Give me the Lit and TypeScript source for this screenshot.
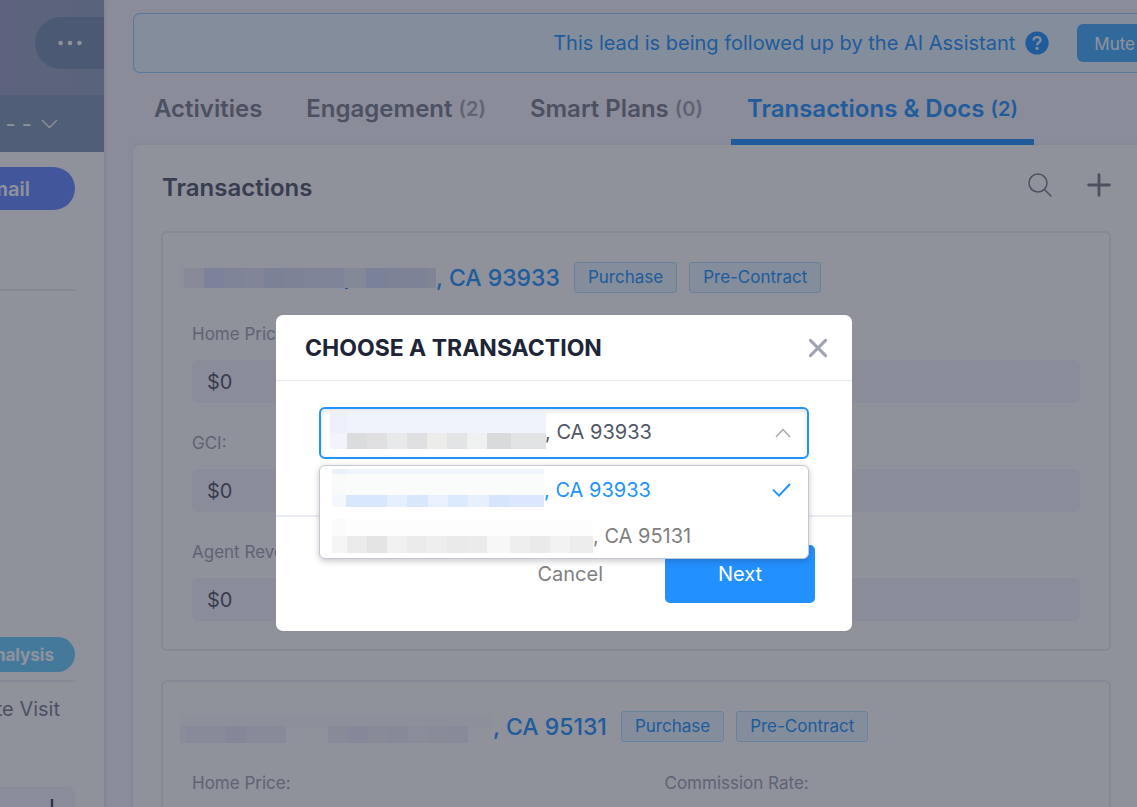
import { LitElement, html, svg, css } from "lit";
import { customElement, property, state } from "lit/decorators.js";

type Cell = [x: number, y: number, w: number, h: number, fill: string];

const mosaic = (width: number, height: number, cells: Cell[]) => html`
  <svg width=${width} height=${height} viewBox="0 0 ${width} ${height}" shape-rendering="crispEdges" aria-hidden="true">
    ${cells.map(([x, y, w, h, fill]) => svg`<rect x=${x} y=${y} width=${w} height=${h} fill=${fill}></rect>`)}
  </svg>
`;

const strip = (x: number, y: number, w: number, h: number, fills: string[]): Cell[] =>
  fills.map((fill, i) => [x + i * w, y, w, h, fill]);

interface Transaction {
  id: string;
  zip: string;
  width: number;
  cells: Cell[];
  tags: string[];
  rows: { label: string; value: string; side: string }[];
}

const ROWS = [
  { label: "Home Price:", value: "$0", side: "Commission Rate:" },
  { label: "GCI:", value: "$0", side: "" },
  { label: "Agent Revenue:", value: "$0", side: "" },
];

const TRANSACTIONS: Transaction[] = [
  {
    id: "a",
    zip: "CA 93933",
    width: 256,
    cells: [
      [0, 0, 4, 23, "#fafafd"],
      [4, 3, 20, 20, "#f0f0f7"],
      ...strip(24, 3, 20, 20, ["#d8e2fb", "#dfe4f8", "#e5e6f8", "#d7e0f8", "#dde1f5", "#dfe3f6", "#dfe3f6"]),
      [164, 3, 22, 20, "#ebecf4"],
      [186, 3, 21, 20, "#d2e1f8"],
      [207, 3, 40, 20, "#dbe1f5"],
      [247, 3, 9, 20, "#e2e4f3"],
      [165, 23, 3, 1, "#2093ff"],
    ],
    tags: ["Purchase", "Pre-Contract"],
    rows: ROWS,
  },
  {
    id: "b",
    zip: "CA 95131",
    width: 313,
    cells: [
      [0, 0, 313, 14, "#fafbfc"],
      [0, 12, 6, 20, "#f4f5fb"],
      ...strip(6, 12, 20, 20, ["#eef0f9", "#eef0f9", "#e8ebf8", "#eff0fa", "#eff0fa"]),
      ...strip(148, 12, 20, 20, ["#f0f1f8", "#ebedf8", "#f0f1f9", "#eeeff8", "#f5f5fb", "#f2f3fa", "#eef0f8"]),
    ],
    tags: ["Purchase", "Pre-Contract"],
    rows: ROWS,
  },
];

@customElement("transaction-card")
export class TransactionCard extends LitElement {
  @property({ attribute: false }) item!: Transaction;

  static styles = css`
    * { box-sizing: border-box; }
    :host {
      display: block;
      border: 2px solid #ebecf3;
      border-radius: 6px;
      padding: 29px 29px 28px;
    }
    .head { display: flex; align-items: center; gap: 12px; height: 31px; margin-bottom: 31px; }
    .address {
      display: flex; align-items: center;
      margin: 0 2px 0 -12px;
      color: #2093ff; font-size: 23px; font-weight: 500; line-height: 30px;
      text-decoration: none; white-space: pre;
    }
    .tag {
      height: 31px; padding: 0 13px;
      border: 1px solid #b4e0fb; border-radius: 3px;
      background: #e6f7ff; color: #2093ff;
      font-size: 17px; line-height: 29px; white-space: nowrap;
    }
    .fields { display: grid; grid-template-columns: 1fr 1fr; gap: 30px 57px; }
    .field { display: flex; flex-direction: column; gap: 16px; min-width: 0; }
    label { color: #a0a3af; font-size: 17px; line-height: 20px; height: 20px; }
    input {
      width: 100%; height: 43px; padding: 0 15px;
      border: 0; border-radius: 6px; background: #f5f5fa;
      color: #515666; font: inherit; font-size: 20px;
    }
  `;

  render() {
    const { id, zip, width, cells, tags, rows } = this.item;
    return html`
      <div class="head">
        <a class="address" href="#${id}">${mosaic(width, 32, cells.map(([x, y, w, h, f]) => [x, y + 3, w, Math.min(h, 29 - y), f] as Cell))}<span>, ${zip}</span></a>
        ${tags.map((t) => html`<span class="tag">${t}</span>`)}
      </div>
      <div class="fields">
        ${rows.map(
          (r, i) => html`
            <div class="field">
              <label for="l${i}">${r.label}</label>
              <input id="l${i}" .value=${r.value} />
            </div>
            <div class="field">
              <label for="r${i}">${r.side}</label>
              <input id="r${i}" aria-label=${r.side || "Amount"} />
            </div>
          `
        )}
      </div>
    `;
  }
}

@customElement("lead-sidebar")
export class LeadSidebar extends LitElement {
  static styles = css`
    * { box-sizing: border-box; }
    :host { display: block; overflow: hidden; background: #fff; box-shadow: 0 0 6px rgba(32, 36, 55, 0.12); }
    button { border: 0; font: inherit; }
    .cover { height: 95px; padding-top: 17px; display: flex; justify-content: flex-end; align-items: flex-start;
      background: linear-gradient(90deg, #9aa2c4, #94a2c0); }
    .more { width: 69px; height: 52px; padding: 0; border-radius: 26px 0 0 26px; background: #788fb0; color: #fff;
      display: grid; place-items: center; }
    .stage { height: 57px; padding: 0 46px 0 0; width: 100%; display: flex; justify-content: flex-end; align-items: center;
      gap: 9px; background: #8399b8; color: #fff; font-size: 22px; }
    .body { display: flex; flex-direction: column; padding: 15px 29px 0 0; }
    .email, .analysis { margin-left: -120px; color: #fff; text-align: right; }
    .email { height: 43px; padding: 0 45px 0 0; border-radius: 22px; background: #6488ff; font-size: 20px; font-weight: 600; }
    .rule { height: 2px; margin: 0; border: 0; background: #ebecf3; }
    .rule.first { margin: 79px 0 346px; }
    .analysis { height: 35px; padding: 0 21px 0 0; margin-bottom: 8px; border-radius: 18px; background: #68cfff;
      font-size: 17px; font-weight: 700; }
    .visit { display: flex; justify-content: flex-end; margin: 0; padding: 14px 15px 0 0; color: #797e8c;
      font-size: 20px; line-height: 26px; white-space: nowrap; height: 105px; }
    .add { height: 43px; padding: 0 12px 0 0; border-radius: 0 8px 0 0; background: #f5f5fa; color: #3c4154;
      display: flex; justify-content: flex-end; align-items: center; }
  `;

  render() {
    return html`
      <div class="cover">
        <button class="more" aria-label="More">
          <svg width="24" height="6" viewBox="0 0 24 6" fill="currentColor"><circle cx="2.6" cy="3" r="2.3" /><circle cx="12" cy="3" r="2.3" /><circle cx="21.4" cy="3" r="2.3" /></svg>
        </button>
      </div>
      <button class="stage">
        <span>- -</span>
        <svg width="17" height="10" viewBox="0 0 17 10" fill="none" stroke="currentColor" stroke-width="1.3"><path d="M1 1l7.5 7.5L16 1" /></svg>
      </button>
      <div class="body">
        <button class="email">Email</button>
        <hr class="rule first" />
        <button class="analysis">Analysis</button>
        <hr class="rule" />
        <p class="visit">Site Visit</p>
        <button class="add" aria-label="Add">
          <svg width="22" height="22" viewBox="0 0 22 22" stroke="currentColor" stroke-width="2.4"><path d="M11 1v20M1 11h20" /></svg>
        </button>
      </div>
    `;
  }
}

const OPTIONS: { zip: string; width: number; cells: Cell[] }[] = [
  {
    zip: "CA 93933",
    width: 212,
    cells: [
      [0, 2, 14, 5, "#e9f1fd"],
      [14, 2, 198, 5, "#eff4fd"],
      [0, 7, 14, 21, "#f9fafa"],
      [14, 7, 198, 21, "#fafcfb"],
      [0, 28, 14, 12, "#f4f8fd"],
      [14, 28, 41, 12, "#d9e7fc"],
      [55, 28, 20, 12, "#e6effd"],
      [75, 28, 21, 12, "#d9e7fc"],
      [96, 28, 20, 12, "#e9f1fe"],
      [116, 28, 20, 12, "#dceafd"],
      [136, 28, 21, 12, "#e8f0fd"],
      [157, 28, 20, 12, "#d6e5fc"],
      [177, 28, 35, 12, "#dbe8fc"],
    ],
  },
  {
    zip: "CA 95131",
    width: 261,
    cells: [
      [0, 6, 14, 17, "#fbfbfb"],
      [14, 6, 247, 17, "#fdfdfd"],
      [0, 23, 15, 17, "#f5f5f5"],
      ...strip(15, 23, 20, 17, ["#ebebeb", "#e4e4e4", "#f0f0f0", "#ebebeb", "#eeeeee", "#eaeaea", "#ebebeb"]),
      [155, 23, 23, 17, "#f7f7f7"],
      ...strip(178, 23, 20, 17, ["#eeeeee", "#eaeaea", "#f2f2f2"]),
      [238, 23, 23, 17, "#ededed"],
    ],
  },
];

const FIELD_CELLS: Cell[] = [
  [0, 0, 17, 21, "#ebf0fa"],
  [17, 0, 199, 21, "#eef3fc"],
  [0, 21, 17, 16, "#f1f4fb"],
  ...strip(17, 21, 20, 16, ["#dbdcde", "#e0e0e2", "#e7e9ea", "#e0e0e2", "#ececeb", "#e2e4e5", "#eff1f0"]),
  [157, 21, 24, 16, "#d9dadc"],
  [181, 21, 35, 16, "#e2e3e5"],
];

@customElement("choose-dialog")
export class ChooseDialog extends LitElement {
  @state() private selected = 0;

  static styles = css`
    * { box-sizing: border-box; }
    :host {
      position: fixed; inset: 0; z-index: 10;
      display: flex; justify-content: center; align-items: flex-start;
      padding: 315px 9px 0 0;
      background: rgba(32, 36, 55, 0.5);
    }
    button { border: 0; background: none; padding: 0; font: inherit; }
    .dialog { width: 576px; max-width: 100%; border-radius: 7px; background: #fff; }
    header { display: flex; justify-content: space-between; align-items: center; height: 66px; padding: 0 24px 0 29px;
      border-bottom: 1px solid #ebecf1; }
    h2 { margin: 0; color: #202437; font-size: 23px; font-weight: 700; line-height: 30px; }
    .close { display: grid; color: #a0a3af; }
    .body { padding: 26px 43px 56px 43px; border-bottom: 2px solid #ebecf3; }
    .picker { position: relative; }
    select {
      display: block; width: 100%; height: 52px; padding: 0 40px 2px 224px; margin: 0;
      appearance: none; border: 2px solid #2093ff; border-radius: 6px; outline: 0;
      background: #fff; color: #515666; font: inherit; font-size: 20px;
      box-shadow: inset 0 2px 5px rgba(32, 36, 55, 0.14);
    }
    .mask { position: absolute; left: 11px; top: 5px; display: grid; pointer-events: none; }
    .caret { position: absolute; right: 18px; top: 21px; display: grid; color: #a0a3af; pointer-events: none; }
    .menu {
      position: absolute; left: 0; right: 0; top: 58px;
      margin: 0; padding: 0; list-style: none;
      border: 1px solid #c6c8d1; border-radius: 6px; background: #fff;
      box-shadow: 0 2px 6px rgba(32, 36, 55, 0.25);
    }
    .option { display: flex; align-items: center; height: 46px; padding: 1px 17px 0 12px; color: #7f7f7f; font-size: 20px;
      line-height: 26px; white-space: pre; }
    .option svg { flex: none; }
    .option.on { color: #2093ff; }
    .option .tick { margin-left: auto; }
    footer { display: flex; justify-content: flex-end; align-items: center; gap: 62px; padding: 28px 37px 28px 0; }
    .cancel { color: #7f7f7f; font-size: 20px; }
    .next { width: 150px; height: 58px; border-radius: 5px; background: #2390ff; color: #fff; font-size: 20px; }
  `;

  render() {
    return html`
      <div class="dialog" role="dialog" aria-modal="true" aria-labelledby="title">
        <header>
          <h2 id="title">CHOOSE A TRANSACTION</h2>
          <button class="close" aria-label="Close">
            <svg width="20" height="20" viewBox="0 0 20 20" fill="none" stroke="currentColor" stroke-width="3" stroke-linecap="round"><path d="M2.4 2.4l15.2 15.2M17.6 2.4L2.4 17.6" /></svg>
          </button>
        </header>
        <div class="body">
          <div class="picker">
            <select aria-label="Transaction" @change=${(e: Event) => (this.selected = (e.target as HTMLSelectElement).selectedIndex)}>
              ${OPTIONS.map((o, i) => html`<option ?selected=${i === this.selected}>, ${o.zip}</option>`)}
            </select>
            <span class="mask">${mosaic(216, 37, FIELD_CELLS)}</span>
            <span class="caret">
              <svg width="16" height="10" viewBox="0 0 16 10" fill="none" stroke="currentColor" stroke-width="1.3"><path d="M1 9l7-7.5L15 9" /></svg>
            </span>
            <ul class="menu" role="listbox" aria-label="Transactions">
              ${OPTIONS.map(
                (o, i) => html`
                  <li class="option ${i === this.selected ? "on" : ""}" role="option" aria-selected=${i === this.selected} @click=${() => (this.selected = i)}>${mosaic(o.width, 46, o.cells)}<span>, ${o.zip}</span>${i === this.selected
                    ? html`<svg class="tick" width="19" height="14" viewBox="0 0 19 14" fill="none" stroke="currentColor" stroke-width="2"><path d="M1 6.6l6 6L18 1" /></svg>`
                    : ""}</li>
                `
              )}
            </ul>
          </div>
        </div>
        <footer>
          <button class="cancel">Cancel</button>
          <button class="next">Next</button>
        </footer>
      </div>
    `;
  }
}

const TABS = [
  { name: "Activities", count: "" },
  { name: "Engagement", count: "(2)" },
  { name: "Smart Plans", count: "(0)" },
  { name: "Transactions & Docs", count: "(2)" },
];

@customElement("app-root")
export class AppRoot extends LitElement {
  @state() private tab = 3;

  static styles = css`
    * { box-sizing: border-box; }
    :host {
      display: grid; grid-template-columns: 104px minmax(0, 1fr);
      height: 100vh; overflow: hidden;
      background: #f5f4fa; color: #515666;
      font-family: Inter, "Noto Sans", sans-serif;
    }
    button { border: 0; background: none; padding: 0; font: inherit; color: inherit; }
    main { padding: 13px 0 0 29px; min-width: 0; }
    .banner {
      display: flex; justify-content: flex-end; align-items: center; height: 60px;
      border: 1px solid #8cd0f8; border-right: 0; border-radius: 7px 0 0 7px;
      background: #e6f7ff; color: #2093ff; font-size: 20px; white-space: nowrap;
    }
    .help { display: grid; margin: 0 28px 0 10px; }
    .mute { height: 38px; padding: 2px 2px 0 17px; border-radius: 6px 0 0 6px; background: #45aeff; color: #fff; font-size: 17px; }
    nav { display: flex; gap: 12px; height: 72px; padding-left: 5px; white-space: nowrap; }
    .tab { display: flex; align-items: center; gap: 6px; padding: 5px 16px 0; border-bottom: 6px solid transparent;
      color: #797e8c; font-size: 24px; font-weight: 600; }
    .count { font-size: 20px; color: #a0a3af; }
    .tab.on, .tab.on .count { color: #2093ff; }
    .tab.on { border-color: #2093ff; }
    .panel { padding: 0 26px 0 28px; border-radius: 8px 0 0 0; background: #fff; box-shadow: 0 0 6px rgba(32, 36, 55, 0.08); }
    .bar { display: flex; align-items: center; height: 86px; gap: 35px; }
    h1 { margin: 0 auto 0 1px; font-size: 24px; font-weight: 600; line-height: 30px; }
    .icon { display: grid; color: #797e8c; padding-bottom: 6px; }
    .cards { display: flex; flex-direction: column; gap: 29px; }
  `;

  render() {
    return html`
      <lead-sidebar></lead-sidebar>
      <main>
        <div class="banner">
          <span>This lead is being followed up by the AI Assistant</span>
          <button class="help" aria-label="Help">
            <svg width="24" height="24" viewBox="0 0 24 24"><circle cx="12" cy="12" r="11.6" fill="#2093ff" /><path d="M8.6 9.4c0-4.4 7-4.4 7-.4 0 2.400-3.500 2.600-3.500 5.200" fill="none" stroke="#e6f7ff" stroke-width="2.300" /><circle cx="12.100" cy="17.300" r="1.600" fill="#e6f7ff" /></svg>
          </button>
          <button class="mute">Mute</button>
        </div>
        <nav>
          ${TABS.map(
            (t, i) => html`
              <button class="tab ${i === this.tab ? "on" : ""}" @click=${() => (this.tab = i)}>
                <span>${t.name}</span>${t.count ? html`<span class="count">${t.count}</span>` : ""}
              </button>
            `
          )}
        </nav>
        <section class="panel">
          <div class="bar">
            <h1>Transactions</h1>
            <button class="icon" aria-label="Search">
              <svg width="24" height="24" viewBox="0 0 24 24" fill="none" stroke="currentColor" stroke-width="1.500"><circle cx="10" cy="10" r="9" /><path d="M16.500 16.500l7 7" /></svg>
            </button>
            <button class="icon" aria-label="Add transaction">
              <svg width="24" height="24" viewBox="0 0 24 24" fill="none" stroke="currentColor" stroke-width="2.800" stroke-linecap="round"><path d="M12 1.600v20.800M1.600 12h20.800" /></svg>
            </button>
          </div>
          <div class="cards">
            ${TRANSACTIONS.map((t) => html`<transaction-card .item=${t}></transaction-card>`)}
          </div>
        </section>
      </main>
      <choose-dialog></choose-dialog>
    `;
  }
}
